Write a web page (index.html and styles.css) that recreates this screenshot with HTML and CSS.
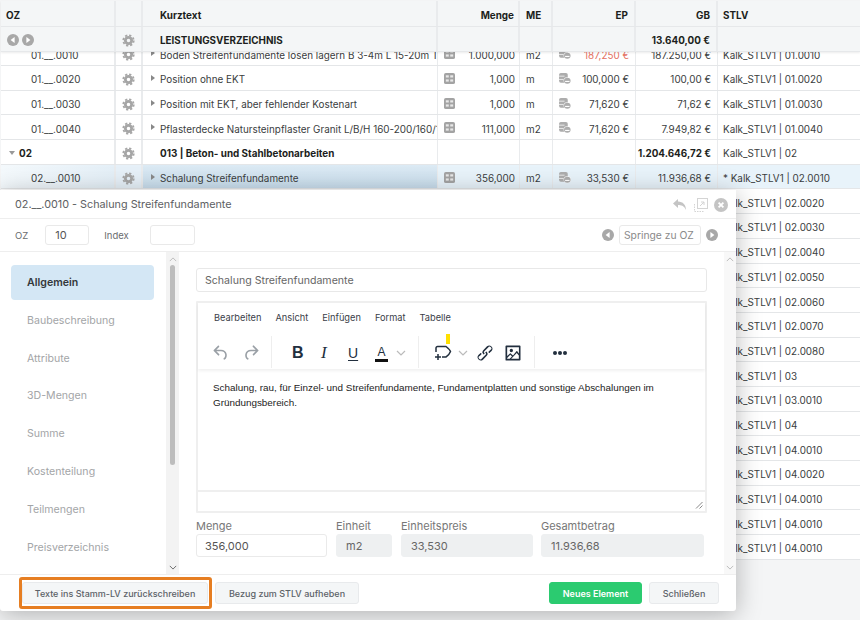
FILE: index.html
```html
<!DOCTYPE html>
<html lang="de">
<head>
    <meta charset="UTF-8">
    <title>Leistungsverzeichnis</title>
    <link rel="stylesheet" href="styles.css">
</head>
<body>
  <svg class="icon-defs" xmlns="http://www.w3.org/2000/svg">
    <symbol id="gear" viewBox="0 0 14 14">
      <circle cx="7" cy="7" r="3.4" fill="none" stroke="currentColor" stroke-width="3"/>
      <circle cx="7" cy="7" r="5.6" fill="none" stroke="currentColor" stroke-width="2" stroke-dasharray="2.4 2"/>
    </symbol>
    <symbol id="calc" viewBox="0 0 12 12">
      <rect width="12" height="12" rx="2" fill="currentColor"/>
      <rect x="2" y="2.5" width="3.2" height="2.4" fill="#fff" opacity=".75"/>
      <rect x="6.8" y="2.5" width="3.2" height="2.4" fill="#fff" opacity=".75"/>
      <rect x="2" y="7" width="3.2" height="2.4" fill="#fff" opacity=".75"/>
      <rect x="6.8" y="7" width="3.2" height="2.4" fill="#fff" opacity=".75"/>
    </symbol>
    <symbol id="stack" viewBox="0 0 13 12">
      <rect x="0" y="0" width="9.500" height="10.500" rx="2" fill="currentColor"/>
      <rect x="0" y="3" width="6" height=".8" fill="#fff"/>
      <rect x="0" y="6.500" width="5" height=".8" fill="#fff"/>
      <ellipse cx="9" cy="8.300" rx="4" ry="3.700" fill="#fff"/>
      <ellipse cx="9" cy="8.500" rx="3.600" ry="3.300" fill="currentColor"/>
      <rect x="6.600" y="8.600" width="4.800" height="1.200" fill="#fff"/>
    </symbol>
    <symbol id="prev" viewBox="0 0 12 12">
      <circle cx="6" cy="6" r="6" fill="currentColor"/>
      <path d="M7.6 3v6L3.6 6z" fill="#fff"/>
    </symbol>
    <symbol id="next" viewBox="0 0 12 12">
      <circle cx="6" cy="6" r="6" fill="currentColor"/>
      <path d="M4.4 3v6l4-3z" fill="#fff"/>
    </symbol>
    <symbol id="undo" viewBox="0 0 24 24">
      <path d="M6.4 8H12c3.7 0 6.2 2 6.8 5.1.6 2.7-.4 5.6-2.3 6.8a1 1 0 01-1-1.8c1.1-.7 1.8-2.7 1.4-4.6-.5-2.1-2.1-3.5-4.9-3.5H6.4l3.3 3.3a1 1 0 11-1.4 1.4l-5-5a1 1 0 010-1.4l5-5a1 1 0 011.4 1.4L6.4 8z" fill="currentColor"/>
    </symbol>
    <symbol id="redo" viewBox="0 0 24 24">
      <path d="M17.6 10H12c-2.8 0-4.4 1.4-4.9 3.5-.4 2 .3 3.9 1.4 4.6a1 1 0 11-1 1.8c-2-1.2-2.9-4.1-2.3-6.8.6-3 3-5.1 6.8-5.1h5.6l-3.3-3.3a1 1 0 111.4-1.4l5 5a1 1 0 010 1.4l-5 5a1 1 0 01-1.4-1.4l3.3-3.3z" fill="currentColor"/>
    </symbol>
    <symbol id="chev" viewBox="0 0 10 6">
      <path d="M1 1l4 4 4-4" fill="none" stroke="currentColor" stroke-width="1.2"/>
    </symbol>
  </svg>

  <div class="grid-head">
    <div class="row head-row">
      <div class="cell oz">OZ</div>
      <div class="cell"></div>
      <div class="cell text">Kurztext</div>
      <div class="cell num">Menge</div>
      <div class="cell me">ME</div>
      <div class="cell num ep">EP</div>
      <div class="cell num gb">GB</div>
      <div class="cell stlv">STLV</div>
    </div>
    <div class="row head-row total-row">
      <div class="cell nav-btns">
        <svg class="ic-nav"><use href="#prev"/></svg>
        <svg class="ic-nav"><use href="#next"/></svg>
      </div>
      <div class="cell gear-cell"><svg class="ic-gear"><use href="#gear"/></svg></div>
      <div class="cell text">LEISTUNGSVERZEICHNIS</div>
      <div class="cell"></div>
      <div class="cell"></div>
      <div class="cell"></div>
      <div class="cell num gb">13.640,00 €</div>
      <div class="cell"></div>
    </div>
  </div>

  <div class="grid-body">
    <div class="rows">
      <div class="row">
        <div class="cell oz pos">01.__.0010</div>
        <div class="cell gear-cell"><svg class="ic-gear"><use href="#gear"/></svg></div>
        <div class="cell text"><i class="tri"></i><span class="clip">Boden Streifenfundamente lösen lagern B 3-4m L 15-20m T</span></div>
        <div class="cell num"><svg class="ic-calc"><use href="#calc"/></svg>1.000,000</div>
        <div class="cell me">m2</div>
        <div class="cell num ep"><svg class="ic-stack"><use href="#stack"/></svg><span class="red">187,250 €</span></div>
        <div class="cell num gb">187.250,00 €</div>
        <div class="cell stlv">Kalk_STLV1 | 01.0010</div>
      </div>
      <div class="row">
        <div class="cell oz pos">01.__.0020</div>
        <div class="cell gear-cell"><svg class="ic-gear"><use href="#gear"/></svg></div>
        <div class="cell text"><i class="tri"></i><span class="clip">Position ohne EKT</span></div>
        <div class="cell num"><svg class="ic-calc"><use href="#calc"/></svg>1,000</div>
        <div class="cell me">m</div>
        <div class="cell num ep"><svg class="ic-stack"><use href="#stack"/></svg>100,000 €</div>
        <div class="cell num gb">100,00 €</div>
        <div class="cell stlv">Kalk_STLV1 | 01.0020</div>
      </div>
      <div class="row">
        <div class="cell oz pos">01.__.0030</div>
        <div class="cell gear-cell"><svg class="ic-gear"><use href="#gear"/></svg></div>
        <div class="cell text"><i class="tri"></i><span class="clip">Position mit EKT, aber fehlender Kostenart</span></div>
        <div class="cell num"><svg class="ic-calc"><use href="#calc"/></svg>1,000</div>
        <div class="cell me">m</div>
        <div class="cell num ep"><svg class="ic-stack"><use href="#stack"/></svg>71,620 €</div>
        <div class="cell num gb">71,62 €</div>
        <div class="cell stlv">Kalk_STLV1 | 01.0030</div>
      </div>
      <div class="row">
        <div class="cell oz pos">01.__.0040</div>
        <div class="cell gear-cell"><svg class="ic-gear"><use href="#gear"/></svg></div>
        <div class="cell text"><i class="tri"></i><span class="clip">Pflasterdecke Natursteinpflaster Granit L/B/H 160-200/160/140</span></div>
        <div class="cell num"><svg class="ic-calc"><use href="#calc"/></svg>111,000</div>
        <div class="cell me">m2</div>
        <div class="cell num ep"><svg class="ic-stack"><use href="#stack"/></svg>71,620 €</div>
        <div class="cell num gb">7.949,82 €</div>
        <div class="cell stlv">Kalk_STLV1 | 01.0040</div>
      </div>
      <div class="row group">
        <div class="cell oz"><i class="tri-down"></i>02</div>
        <div class="cell gear-cell"><svg class="ic-gear"><use href="#gear"/></svg></div>
        <div class="cell text">013 | Beton- und Stahlbetonarbeiten</div>
        <div class="cell"></div>
        <div class="cell"></div>
        <div class="cell"></div>
        <div class="cell num gb">1.204.646,72 €</div>
        <div class="cell stlv">Kalk_STLV1 | 02</div>
      </div>
      <div class="row selected">
        <div class="cell oz pos">02.__.0010</div>
        <div class="cell gear-cell"><svg class="ic-gear"><use href="#gear"/></svg></div>
        <div class="cell text"><i class="tri"></i><span class="clip">Schalung Streifenfundamente</span></div>
        <div class="cell num"><svg class="ic-calc"><use href="#calc"/></svg>356,000</div>
        <div class="cell me">m2</div>
        <div class="cell num ep"><svg class="ic-stack"><use href="#stack"/></svg>33,530 €</div>
        <div class="cell num gb">11.936,68 €</div>
        <div class="cell stlv">* Kalk_STLV1 | 02.0010</div>
      </div>
      <div class="row"><div class="cell stlv only">Kalk_STLV1 | 02.0020</div></div>
      <div class="row"><div class="cell stlv only">Kalk_STLV1 | 02.0030</div></div>
      <div class="row"><div class="cell stlv only">Kalk_STLV1 | 02.0040</div></div>
      <div class="row"><div class="cell stlv only">Kalk_STLV1 | 02.0050</div></div>
      <div class="row"><div class="cell stlv only">Kalk_STLV1 | 02.0060</div></div>
      <div class="row"><div class="cell stlv only">Kalk_STLV1 | 02.0070</div></div>
      <div class="row"><div class="cell stlv only">Kalk_STLV1 | 02.0080</div></div>
      <div class="row"><div class="cell stlv only">Kalk_STLV1 | 03</div></div>
      <div class="row"><div class="cell stlv only">Kalk_STLV1 | 03.0010</div></div>
      <div class="row"><div class="cell stlv only">Kalk_STLV1 | 04</div></div>
      <div class="row"><div class="cell stlv only">Kalk_STLV1 | 04.0010</div></div>
      <div class="row"><div class="cell stlv only">Kalk_STLV1 | 04.0020</div></div>
      <div class="row"><div class="cell stlv only">Kalk_STLV1 | 04.0010</div></div>
      <div class="row"><div class="cell stlv only">Kalk_STLV1 | 04.0010</div></div>
      <div class="row"><div class="cell stlv only">Kalk_STLV1 | 04.0010</div></div>
    </div>
  </div>

  <div class="modal">
    <div class="modal-title">
      <span class="modal-name">02.__.0010 - Schalung Streifenfundamente</span>
      <div class="title-icons">
        <svg class="ic-back" viewBox="0 0 16 14"><path d="M6 1L1 5.5 6 10V7c3 0 6 .5 8 5 0-5-3-8.500-8-8.500z" fill="currentColor"/></svg>
        <svg class="ic-popup" viewBox="0 0 14 14"><rect x="3.500" y=".5" width="10" height="10" fill="none" stroke="currentColor"/><path d="M.5 6v7.500h9" fill="none" stroke="currentColor" stroke-dasharray="1.500 1"/><path d="M6 8l4-4M7 4h3v3" fill="none" stroke="currentColor"/></svg>
        <svg class="ic-close" viewBox="0 0 14 14"><circle cx="7" cy="7" r="7" fill="currentColor"/><path d="M4.600 4.600l4.800 4.800M9.400 4.600l-4.800 4.800" stroke="#fff" stroke-width="1.800"/></svg>
      </div>
    </div>
    <div class="modal-tools">
      <span class="tool-label">OZ</span>
      <div class="tool-input oz-input">10</div>
      <span class="tool-label index-label">Index</span>
      <div class="tool-input index-input"></div>
      <div class="jump">
        <svg class="ic-nav"><use href="#prev"/></svg>
        <div class="tool-input jump-input">Springe zu OZ</div>
        <svg class="ic-nav"><use href="#next"/></svg>
      </div>
    </div>

    <div class="modal-main">
      <div class="side">
        <div class="side-item active">Allgemein</div>
        <div class="side-item">Baubeschreibung</div>
        <div class="side-item">Attribute</div>
        <div class="side-item">3D-Mengen</div>
        <div class="side-item">Summe</div>
        <div class="side-item">Kostenteilung</div>
        <div class="side-item">Teilmengen</div>
        <div class="side-item">Preisverzeichnis</div>
      </div>
      <div class="scrollbar side-scroll">
        <svg class="ic-chev up"><use href="#chev"/></svg>
        <div class="thumb"></div>
        <svg class="ic-chev dark"><use href="#chev"/></svg>
      </div>

      <div class="content">
        <div class="title-field">Schalung Streifenfundamente</div>
        <div class="editor">
          <div class="editor-head">
            <div class="menubar">
              <span>Bearbeiten</span>
              <span>Ansicht</span>
              <span>Einfügen</span>
              <span>Format</span>
              <span>Tabelle</span>
            </div>
            <div class="toolbar">
              <div class="tb-group history">
                <svg class="tb-icon"><use href="#undo"/></svg>
                <svg class="tb-icon"><use href="#redo"/></svg>
              </div>
              <div class="tb-group fmt">
                <span class="tb-b">B</span>
                <span class="tb-i">I</span>
                <span class="tb-u">U</span>
                <span class="tb-a">A</span>
                <svg class="ic-chev tb-chev"><use href="#chev"/></svg>
              </div>
              <div class="tb-group ins">
                <div class="comment-btn">
                  <i class="yellow-mark"></i>
                  <svg class="ic-comment" viewBox="0 0 20 16"><path d="M3 7V3a1.500 1.500 0 0 1 1.500-1.500H13c2.500 2 4 3.500 4.500 5C16.500 9 15 11 13 12H9M2 12h6M5 9v6" fill="none" stroke="currentColor" stroke-width="1.500"/></svg>
                </div>
                <svg class="ic-chev tb-chev"><use href="#chev"/></svg>
                <svg class="tb-icon link" viewBox="0 0 24 24"><path d="M6.200 12.300a1 1 0 011.400 1.400l-2 2a2 2 0 102.600 2.800l4.800-4.800a1 1 0 000-1.400 1 1 0 111.400-1.300 2.900 2.900 0 010 4L9.600 20a3.900 3.900 0 01-5.500-5.500l2-2zm11.600-.6a1 1 0 01-1.400-1.400l2-2a2 2 0 10-2.600-2.800L11 10.300a1 1 0 000 1.400A1 1 0 119.600 13a2.900 2.900 0 010-4L14.400 4a3.900 3.900 0 015.500 5.500l-2 2z" fill="currentColor"/></svg>
                <svg class="tb-icon picture" viewBox="0 0 24 24"><path d="M5 15.700l3.300-3.200c.3-.3.700-.3 1 0L12 15l4.100-5c.3-.4.800-.4 1 0l2 2.500V5H5v10.700zM5 18v1h3l2.800-2.900-2-2L5 17.900zm14-3l-2.500-3-6.600 7H19v-4zM4 3h16c.6 0 1 .4 1 1v16c0 .6-.4 1-1 1H4a1 1 0 01-1-1V4c0-.6.4-1 1-1zm6 8a2 2 0 110-4 2 2 0 010 4z" fill="currentColor" fill-rule="evenodd"/></svg>
              </div>
              <div class="tb-group more">
                <i class="dot"></i><i class="dot"></i><i class="dot"></i>
              </div>
            </div>
          </div>
          <div class="editor-text">Schalung, rau, für Einzel- und Streifenfundamente, Fundamentplatten und sonstige Abschalungen im Gründungsbereich.</div>
          <div class="editor-status">
            <svg class="ic-resize" viewBox="0 0 8 8"><path d="M7.500 1L1 7.500M7.500 4.500L4.500 7.500" stroke="#888" stroke-width="1"/></svg>
          </div>
        </div>
        <div class="fields">
          <div class="field f-menge"><label>Menge</label><div class="value">356,000</div></div>
          <div class="field f-einheit"><label>Einheit</label><div class="value ro">m2</div></div>
          <div class="field f-ep"><label>Einheitspreis</label><div class="value ro">33,530</div></div>
          <div class="field f-gb"><label>Gesamtbetrag</label><div class="value ro">11.936,68</div></div>
        </div>
      </div>

      <div class="scrollbar content-scroll">
        <svg class="ic-chev up"><use href="#chev"/></svg>
        <svg class="ic-chev"><use href="#chev"/></svg>
      </div>
    </div>

    <div class="modal-foot">
      <button class="btn btn-write">Texte ins Stamm-LV zurückschreiben</button>
      <button class="btn btn-unlink">Bezug zum STLV aufheben</button>
      <button class="btn btn-new">Neues Element</button>
      <button class="btn btn-close">Schließen</button>
    </div>
  </div>
</body>
</html>
```

FILE: styles.css
```css
html, body {
    margin: 0;
    height: 620px;
    overflow: hidden;
}
body {
    position: relative;
    box-sizing: border-box;
    padding: 1px 0 0 1px;
    background-color: #f4f5f6;
    font-family: Inter, "Liberation Sans", sans-serif;
    font-size: 9.9px;
    color: #3a3d40;
}
.icon-defs {
    display: none;
}

/* grid */
.row {
    display: grid;
    grid-template-columns: 115px 27px 295px 82px 33px 83px 82px 1fr;
    height: 24.7px;
    box-sizing: border-box;
    background-color: #fff;
    border-bottom: 1px solid #e4e6e8;
}
.cell {
    display: flex;
    align-items: center;
    box-sizing: border-box;
    min-width: 0;
    padding-top: 3px;
    border-right: 1px solid #e9ebed;
    white-space: nowrap;
}
.cell:nth-child(2), .cell:nth-child(1) {
    border-right-width: 2px;
}
.cell:last-child {
    border-right: none;
}
.oz {
    padding-left: 5px;
}
.oz.pos {
    padding-left: 30px;
}
.gear-cell {
    justify-content: center;
}
.text {
    padding-left: 17px;
    position: relative;
}
.clip {
    overflow: hidden;
}
.num {
    justify-content: flex-end;
    padding-right: 4px;
    position: relative;
}
.num.ep, .num.gb {
    padding-right: 6px;
}
.me {
    padding-left: 6px;
}
.stlv {
    padding-left: 5px;
}
.stlv.only {
    grid-column: 8;
}
.red {
    color: #e5705f;
}

.grid-head {
    position: relative;
    z-index: 1;
    box-shadow: 0 1px 2px rgba(0, 0, 0, 0.08);
}
.head-row {
    height: 26px;
    background-color: #f4f6f7;
    border-bottom: 1px solid #e6e8ea;
    font-weight: 700;
    color: #1c1e20;
}
.head-row .cell {
    padding-top: 2px;
    border-right: 2px solid #e9ebed;
}
.head-row .cell:last-child {
    border-right: none;
}
.total-row {
    height: 25px;
}
.nav-btns {
    gap: 3px;
    padding-left: 6px;
}
.grid-body {
    height: 508px;
    overflow: hidden;
}
.rows {
    margin-top: -10.7px;
}
.group {
    background-color: #fff;
}
.group .oz, .group .text, .group .gb {
    font-weight: 700;
    color: #1c1e20;
}
.group .oz {
    padding-left: 8px;
}
.group .stlv {
    font-weight: 400;
}
.selected {
    background-color: #e8f3fa;
}
.selected .oz {
    background: linear-gradient(to right, #f4f9fc, #e4eff7);
}
.selected .gear-cell {
    background-color: #e6f0f8;
}
.selected .text {
    background: linear-gradient(to bottom, #dceaf4, #c8ddec);
}

/* small icons */
.ic-gear {
    width: 13px;
    height: 13px;
    color: #a6a6a6;
}
.ic-nav {
    width: 12px;
    height: 12px;
    flex: none;
    color: #a8a8a8;
}
.ic-calc {
    position: absolute;
    left: 6px;
    top: 7px;
    width: 11px;
    height: 11px;
    color: #a3a3a3;
}
.ic-stack {
    position: absolute;
    left: 6px;
    top: 7px;
    width: 12px;
    height: 11px;
    color: #adadad;
}
.tri {
    position: absolute;
    left: 8px;
    top: 9px;
    border-left: 4px solid #888;
    border-top: 3.5px solid transparent;
    border-bottom: 3.5px solid transparent;
}
.tri-down {
    display: inline-block;
    margin-right: 4px;
    border-top: 4px solid #999;
    border-left: 3.5px solid transparent;
    border-right: 3.5px solid transparent;
}

/* modal */
.modal {
    position: absolute;
    left: 0;
    top: 190px;
    width: 736px;
    height: 421px;
    display: flex;
    flex-direction: column;
    background-color: #fff;
    border-radius: 0 0 3px 3px;
    box-shadow: 0 4px 26px rgba(0, 0, 0, 0.28);
    color: #666;
}
.modal-title {
    flex: none;
    display: flex;
    align-items: center;
    justify-content: space-between;
    height: 28px;
    padding: 0 8px 0 15px;
    border-bottom: 1px solid #eee;
}
.modal-name {
    font-size: 10.8px;
    color: #5d6063;
}
.title-icons {
    display: flex;
    align-items: center;
    gap: 6px;
    padding-top: 1px;
    color: #c4c4c4;
}
.ic-back {
    width: 16px;
    height: 14px;
}
.ic-popup {
    width: 14px;
    height: 14px;
    color: #d4d4d4;
}
.ic-close {
    width: 14px;
    height: 14px;
}
.modal-tools {
    flex: none;
    display: flex;
    align-items: center;
    height: 33px;
    box-sizing: border-box;
    padding: 0 18px 0 15px;
    border-bottom: 1px solid #eee;
}
.tool-label {
    color: #6a6d70;
    font-size: 9.5px;
}
.tool-input {
    display: flex;
    align-items: center;
    box-sizing: border-box;
    height: 20px;
    border: 1px solid #e9e9e9;
    border-radius: 3px;
    background-color: #fff;
}
.oz-input {
    width: 44px;
    margin-left: 17px;
    padding-left: 9px;
    font-size: 11px;
    color: #555;
}
.index-label {
    margin-left: 15px;
}
.index-input {
    width: 45px;
    margin-left: 21px;
}
.jump {
    display: flex;
    align-items: center;
    gap: 5px;
    margin-left: auto;
}
.jump-input {
    width: 82px;
    padding-left: 4px;
    font-size: 10.3px;
    color: #8a8a8a;
}
.modal-main {
    flex: 1;
    display: flex;
    min-height: 0;
}
.side {
    flex: none;
    width: 166px;
    box-sizing: border-box;
    padding: 13px 12px 0 11px;
}
.side-item {
    height: 37.8px;
    box-sizing: border-box;
    padding: 11px 0 0 16px;
    font-size: 10.6px;
    color: #a3a5a7;
}
.side-item.active {
    height: 35px;
    margin-bottom: 2.800px;
    border-radius: 4px;
    background-color: #d4e7f5;
    font-weight: 600;
    color: #33373a;
}
.scrollbar {
    flex: none;
    display: flex;
    flex-direction: column;
    align-items: center;
    justify-content: space-between;
    box-sizing: border-box;
    padding: 5px 0 4px;
    width: 13px;
    background-color: #f3f3f3;
}
.ic-chev {
    display: block;
    width: 8px;
    height: 5px;
    color: #bbb;
}
.ic-chev.up {
    transform: rotate(180deg);
}
.ic-chev.dark {
    color: #666;
}
.thumb {
    width: 5px;
    height: 200px;
    margin-bottom: 98px;
    border-radius: 3px;
    background-color: #bdbdbd;
}
.content {
    flex: 1;
    min-width: 0;
    padding: 16px 17px 0 17px;
}
.content-scroll {
    width: 12px;
    background-color: #f8f8f8;
}
.title-field {
    display: flex;
    align-items: center;
    box-sizing: border-box;
    height: 24px;
    padding-left: 8px;
    border: 1px solid #e8e8e8;
    border-radius: 3px;
    font-size: 10.6px;
    color: #666;
}
.editor {
    height: 212px;
    box-sizing: border-box;
    margin-top: 9px;
    display: flex;
    flex-direction: column;
    border: 2px solid #efefef;
    border-radius: 1px;
}
.editor-head {
    flex: none;
    height: 66px;
    box-sizing: border-box;
    box-shadow: 0 2px 3px rgba(0, 0, 0, 0.06);
}
.menubar {
    display: flex;
    gap: 14px;
    padding: 9px 0 0 16px;
    font-size: 9.25px;
    line-height: 12px;
    color: #3a4048;
}
.toolbar {
    display: flex;
    margin-top: 12px;
    height: 32px;
    padding-left: 7px;
    color: #222f3e;
}
.tb-group {
    display: flex;
    align-items: center;
    box-sizing: border-box;
    padding-top: 2px;
    border-right: 1px solid #eee;
}
.history {
    width: 67px;
    gap: 9.500px;
    padding-left: 6px;
    color: #9aa0a6;
}
.tb-icon {
    width: 20px;
    height: 20px;
    flex: none;
}
.tb-icon.link {
    margin-left: 6.500px;
}
.tb-icon.picture {
    margin-left: 8px;
}
.fmt {
    width: 147px;
    padding-left: 20px;
}
.tb-b {
    width: 29px;
    font-family: "Liberation Sans", sans-serif;
    font-size: 16px;
    font-weight: 700;
}
.tb-i {
    width: 27px;
    font-family: "Liberation Serif", serif;
    font-size: 17px;
    font-style: italic;
}
.tb-u {
    width: 27px;
    font-family: "Liberation Sans", sans-serif;
    font-size: 14px;
    text-decoration: underline;
    text-underline-offset: 2px;
}
.tb-a {
    width: 13px;
    text-align: center;
    font-family: "Liberation Sans", sans-serif;
    font-size: 12px;
    line-height: 14px;
    border-bottom: 3px solid #111;
}
.ic-chev.tb-chev {
    width: 10px;
    height: 6px;
    margin-left: 8px;
}
.ins {
    width: 116px;
    padding-left: 14px;
}
.comment-btn {
    position: relative;
    width: 21px;
    height: 16px;
}
.ic-comment {
    display: block;
    width: 20px;
    height: 16px;
}
.yellow-mark {
    position: absolute;
    left: 13px;
    top: -11px;
    width: 4px;
    height: 10px;
    background-color: #ffe000;
}
.ins .ic-chev.tb-chev {
    margin-left: 4px;
}
.more {
    border-right: none;
    padding-left: 18px;
    gap: 1px;
}
.dot {
    width: 4px;
    height: 4px;
    border-radius: 50%;
    background-color: #222f3e;
}
.editor-text {
    flex: 1;
    padding: 11px 20px 0 15px;
    font-family: "Liberation Sans", sans-serif;
    font-size: 9.9px;
    line-height: 15px;
    color: #222;
}
.editor-status {
    flex: none;
    position: relative;
    height: 19px;
    border-top: 2px solid #efefef;
}
.ic-resize {
    position: absolute;
    right: 2px;
    bottom: 2px;
    width: 8px;
    height: 8px;
}
.fields {
    display: flex;
    margin-top: 7px;
}
.field label {
    display: block;
    font-size: 11px;
    line-height: 13px;
    color: #777;
    margin-bottom: 1px;
}
.value {
    display: flex;
    align-items: center;
    box-sizing: border-box;
    height: 23px;
    padding-left: 8px;
    border: 1px solid #eaeaea;
    border-radius: 3px;
    font-size: 11px;
    color: #555;
}
.value.ro {
    padding-left: 9px;
    border-color: #eef0f1;
    background-color: #eef0f1;
    color: #666;
}
.f-menge {
    width: 131px;
    margin-right: 9px;
}
.f-einheit {
    width: 56px;
    margin-right: 9px;
}
.f-ep {
    width: 132px;
    margin-right: 8px;
}
.f-gb {
    width: 163px;
}
.modal-foot {
    flex: none;
    display: flex;
    align-items: center;
    height: 37px;
    box-sizing: border-box;
    padding: 0 17px 0 22px;
    border-top: 1px solid #eee;
}
.btn {
    height: 22px;
    box-sizing: border-box;
    padding: 0;
    border: 1px solid #e8eaec;
    border-radius: 3px;
    background-color: #f4f6f7;
    font-family: Inter, "Liberation Sans", sans-serif;
    font-size: 9px;
    font-weight: 500;
    color: #5c6268;
}
.btn-write {
    position: relative;
    width: 186px;
}
.btn-write::after {
    content: "";
    position: absolute;
    left: -4px;
    right: -5px;
    top: -6px;
    bottom: -6px;
    border: 3px solid #e67e22;
    border-radius: 3px;
}
.btn-unlink {
    width: 144px;
    margin-left: 7px;
}
.btn-new {
    width: 93px;
    margin-left: auto;
    border-color: #2bcb70;
    background-color: #2bcb70;
    color: #fff;
    font-weight: 600;
}
.btn-close {
    width: 70px;
    margin-left: 7px;
}
```
